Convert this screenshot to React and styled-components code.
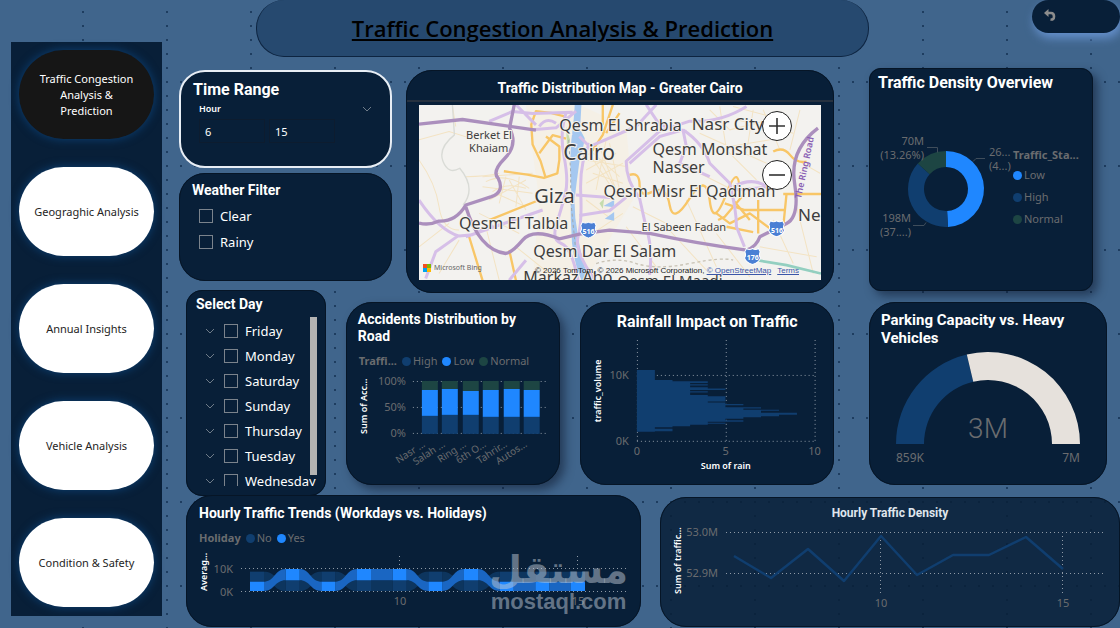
import React from "react";
import styled, { createGlobalStyle, css } from "styled-components";

const HIGH = "#103e6f";
const LOW = "#1f87ff";
const NORMAL = "#1d4543";
const MUTED = "#6a6c6f";

const PAGES = [
  "Traffic Congestion\nAnalysis &\nPrediction",
  "Geograghic Analysis",
  "Annual Insights",
  "Vehicle Analysis",
  "Condition & Safety",
];

const DAYS = ["Friday", "Monday", "Saturday", "Sunday", "Thursday", "Tuesday", "Wednesday"];

// each road: label, top of the "low" part, top of the "high" part
const ROADS = [
  ["Nasr ...", 20, 46],
  ["Salah ...", 19, 45],
  ["Ring ...", 21, 45],
  ["6th O...", 20, 47],
  ["Tahrir...", 19, 47],
  ["Autos...", 20, 47],
];

// rain histogram: y start, x end
const RAIN = [
  [225, 255], [255, 308], [259, 414], [264, 361], [268, 414], [272, 361], [277, 414],
  [281, 467], [285, 361], [289, 414], [293, 361], [300, 414], [304, 467], [320, 414],
  [323, 467], [327, 521], [331, 467], [337, 574], [341, 521], [345, 628], [348, 574],
  [354, 682], [360, 628], [364, 574], [367, 521], [372, 467], [376, 521], [381, 414],
  [384, 467], [387, 414], [390, 361], [394, 308], [397, 255], [402, 308], [409, 255],
];

const rainPath = `M201 225${RAIN.map(([y, x]) => `V${y}H${x}`).join("")}V411H201Z`;

// true when the holiday series is on top of the ribbon
const RIBBON = [false, true, false, true, true, false, true, false, false, false];

function ribbonBand(isYes, yesOnTop) {
  if (yesOnTop) return isYes ? [240, 274] : [274, 306];
  return isYes ? [278, 306] : [248, 278];
}

function ribbonPath(i, isYes) {
  const a = ribbonBand(isYes, RIBBON[i]);
  const b = ribbonBand(isYes, RIBBON[i + 1]);
  const x1 = 252 + i * 107;
  const x2 = x1 + 65;
  const m = x1 + 32;
  return `M${x1} ${a[0]}C${m} ${a[0]} ${m} ${b[0]} ${x2} ${b[0]}V${b[1]}C${m} ${b[1]} ${m} ${a[1]} ${x1} ${a[1]}Z`;
}

function arc(cx, cy, r1, r2, from, to) {
  const p = (r, t) => {
    const a = (t - 0.25) * Math.PI * 2;
    return `${cx + r * Math.cos(a)} ${cy + r * Math.sin(a)}`;
  };
  const big = to - from > 0.5 ? 1 : 0;
  return `M${p(r1, from)}A${r1} ${r1} 0 ${big} 1 ${p(r1, to)}L${p(r2, to)}A${r2} ${r2} 0 ${big} 0 ${p(r2, from)}Z`;
}

const Chevron = () => (
  <svg width="10" height="6" viewBox="0 0 10 6" aria-hidden="true">
    <path d="M1 1l4 4 4-4" fill="none" stroke="#6f7c89" />
  </svg>
);

function TrafficMap() {
  return (
    <MapFrame>
      <MapArt viewBox="60 135 1203 525" preserveAspectRatio="xMidYMid slice">
        <rect x="60" y="135" width="1203" height="525" fill="#f3f2ef" />
        <path d="M380 135L540 135 680 200 700 420 640 520 560 660 400 660 420 420z" fill="#f5f0e6" />
        <g fill="none" stroke="#f3e3c3" strokeWidth="3">
          <path d="M60 240L150 215 230 240M160 140l10 60M250 350l150-10M250 380l150 20M270 420l110-60M290 400l90 40M330 360l50 90M260 365q60-30 130 20M280 395q40-30 100-10M300 430l20-80M350 440l10-90" />
          <path d="M560 300l120 20M580 340l90 30M560 370l110-60M600 260l50 130M630 250l30 140M560 420l80 60M580 520l90-60M600 300l60 110M570 270l90 80M560 330l90-50M575 290l80 120M620 240l-30 150" />
          <path d="M960 140l20 130 90 90M1000 140l150 40M1010 180l170 40M1060 150l-20 130M900 220l200 90M880 330l120 60M1200 150l-30 120M1190 300l70 40M930 150l60 60 120-30M1090 150l50 120M990 260l120-20" />
          <path d="M680 500l90 120M700 440l120 60M800 500l120 130M860 420l90 200M950 520l100 130M1080 560l170 30M1190 440l50 200M1120 480l60 130" />
          <path d="M60 560l90-70M120 640l60-100M240 460l120 60M260 500l40 160M350 560l100 80M60 300q50 70 60 140t60 70M200 350q60 0 100-10" />
        </g>
        <path d="M160 135l6 90q-50 40-34 80t50 20q50 60 10 110" fill="none" stroke="#d9dbd6" strokeWidth="4" />
        <g fill="#a5c8f0">
          <path d="M526 135h20q-2 40-4 74l14 26q-4 30-16 70-8 60-14 110-2 50 8 100 10 80 36 145h-24q-30-70-30-150-4-60 0-110-6-90 0-160 8-60 10-105z" />
          <path d="M612 438l32-18v22zM616 476l28-20v26z" />
        </g>
        <path d="M500 200l12 40-8 40zM600 430l14-14-4 30z" fill="#c5dcae" />
        <g fill="none" strokeLinejoin="round">
          <g stroke="#f8c667" strokeWidth="7">
            <path d="M460 160l-50-6-14 40 4 60 24 50 14 46M496 170l-40-10M420 280l40-54 40 10M440 230l40 30 0 40-6 40-40 14-50-10-70-10M640 135l-30 90-40 60M610 135v60M660 160l-40 60M270 480l150-60M210 530l40 130M330 570l20 90M690 345q30-10 30 30t40 20 50 40 60-20 60 6 50-20 40 14M1120 275q30-16 50 10t50 20M975 430l60 20 120 0M1035 400l-60 70-20 10M950 460l40 30 60-30 80 60M1075 420v100M1000 420l50 60M1160 400l-10 100M1150 402h113M980 500l80 16" />
          </g>
        </g>
        <g fill="none" stroke="#d6bfe8" strokeWidth="9" strokeLinejoin="round">
          <path d="M270 185l70-30 60 6 120-4M400 210l70-6 60-50M350 135l60 60M470 190q-30-20-50 10M500 160q-20 60-6 130t4 110-26 90 14 60 50 110" />
          <path d="M570 250q-30 60-26 150t-8 130 50 130M540 230l30 30 140-60 60-65M740 135l40 60 80 20M850 210q60 40 80 100l60 60q20 80 20 130l24 60M1040 140q-80 50-170 44l-90 30-100 90q0 60 40 110l20 90q20 60 10 140M690 310l90-80 70-20" />
          <path d="M530 405l110 8M540 466l90-14 50-40M850 210l10 50-20 50 90 40M1000 380q60-30 100 0M60 420q60 90 120 108l40-4 60-30M180 525l-70 50-30 80M1000 390l120-10M200 530l230-80M380 600l-50 60" />
        </g>
        <g fill="none" stroke="#ab8fbd" strokeWidth="10" strokeLinejoin="round">
          <path d="M60 193l130-14 220 32" />
          <path d="M345 135l-14 70q26 50-14 90t-20 60q20 40-20 55L200 435q-30 50-80 48-30 14-60 6" />
          <path d="M200 440q40 130 120 140 20-4 50-40t110-4l60-14 90-12 120 10q140 30 290 50 30-10 40-40l80-40q40-20 24-120t70-165" />
        </g>
        <path d="M1070 600l90 15 103 25" fill="none" stroke="#93cfc0" strokeWidth="8" />
        <path d="M508 240l6 100v80l14 140" fill="none" stroke="#a4a9ab" strokeWidth="3" strokeDasharray="9 8" />
        <path d="M590 610q60-20 120 0t160 0 130-10" fill="none" stroke="#c8c2b4" strokeWidth="4" strokeDasharray="9 8" />
        {[[567, 508], [1130, 504], [1058, 587]].map(([x, y]) => (
          <path key={x} transform={`translate(${x} ${y})`} d="M-18-22q9 6 18 0 9 6 18 0l5 10q-5 12 1 18-4 14-24 20-20-6-24-20 6-6 1-18z" fill="#4a7fd4" stroke="#fff" strokeWidth="3" />
        ))}
      </MapArt>
      <MapArt viewBox="0 0 401 175" preserveAspectRatio="xMidYMid slice">
        <MapLabels>
          <text x="47" y="34" fontSize="11">Berket El</text>
          <text x="50" y="47" fontSize="11">Khaiam</text>
          <text x="140" y="26" fontSize="16">Qesm El Shrabia</text>
          <text x="272" y="25" fontSize="17">Nasr City</text>
          <text x="144" y="55" fontSize="21">Cairo</text>
          <text x="233" y="50" fontSize="16">Qesm Monshat</text>
          <text x="233" y="68" fontSize="16">Nasser</text>
          <text x="115" y="98" fontSize="20">Giza</text>
          <text x="184" y="92" fontSize="16">Qesm Misr El Qadimah</text>
          <text x="40" y="124" fontSize="16">Qesm El Talbia</text>
          <text x="222" y="126" fontSize="11">El Sabeen Fadan</text>
          <text x="378" y="116" fontSize="17">Ne</text>
          <text x="114" y="152" fontSize="16">Qesm Dar El Salam</text>
          <text x="104" y="178" fontSize="16">Markaz Abo</text>
          <text x="198" y="181" fontSize="15">Qesm El Maadi</text>
        </MapLabels>
        <RoadName transform="translate(381 94) rotate(-78)">The Ring Road</RoadName>
        <Shield x="169" y="129">516</Shield>
        <Shield x="357" y="128">516</Shield>
        <Shield x="333" y="155">176</Shield>
      </MapArt>
      <Bing>
        <svg width="8" height="8" viewBox="0 0 8 8" aria-hidden="true">
          <path d="M0 0h4v4H0z" fill="#f25022" />
          <path d="M4 0h4v4H4z" fill="#7fba00" />
          <path d="M0 4h4v4H0z" fill="#00a4ef" />
          <path d="M4 4h4v4H4z" fill="#ffb900" />
        </svg>
        Microsoft Bing
      </Bing>
      <Credits>
        <span>© 2026 TomTom, © 2026 Microsoft Corporation, <a href="#osm">© OpenStreetMap</a></span>
        <a href="#terms">Terms</a>
      </Credits>
      <ZoomControls>
        <ZoomButton type="button" aria-label="Zoom in">
          <svg width="16" height="16" viewBox="0 0 16 16"><path d="M0 8h16M8 0v16" stroke="#333" strokeWidth="1.6" /></svg>
        </ZoomButton>
        <ZoomButton type="button" aria-label="Zoom out">
          <svg width="16" height="16" viewBox="0 0 16 16"><path d="M0 8h16" stroke="#333" strokeWidth="1.6" /></svg>
        </ZoomButton>
      </ZoomControls>
    </MapFrame>
  );
}

function AccidentsChart() {
  return (
    <Chart viewBox="0 0 215 110">
      <AxisTitle transform="translate(21 64) rotate(-90)">Sum of Acc...</AxisTitle>
      <Tick x="60" y="15" textAnchor="end">100%</Tick>
      <Tick x="60" y="41" textAnchor="end">50%</Tick>
      <Tick x="60" y="67" textAnchor="end">0%</Tick>
      <GridLine d="M67 11.5H202M67 37.5H202M67 63.5H202" />
      {ROADS.map(([name, low, high], i) => {
        const x = 76 + Math.round(i * 20.4);
        return (
          <g key={name}>
            <rect x={x} y="11" width="16" height={low - 11} fill={NORMAL} />
            <rect x={x} y={low} width="16" height={high - low} fill={LOW} />
            <rect x={x} y={high} width="16" height={64 - high} fill={HIGH} />
            <RoadTick transform={`translate(${x + 4} 76) rotate(-33)`} textAnchor="end">{name}</RoadTick>
          </g>
        );
      })}
    </Chart>
  );
}

function RainChart() {
  return (
    <Chart viewBox="0 0 254 150">
      <AxisTitle transform="translate(21 59) rotate(-90)" textAnchor="middle">traffic_volume</AxisTitle>
      <Tick x="49" y="47" textAnchor="end">10K</Tick>
      <Tick x="49" y="113" textAnchor="end">0K</Tick>
      <GridLine d="M57 43.5H236M57 109.5H236M57.5 8V110M146.5 8V110M235.5 8V110" />
      <path d={rainPath} transform="translate(-10 -37) scale(0.33333)" fill={HIGH} />
      <Tick x="57" y="123" textAnchor="middle">0</Tick>
      <Tick x="146" y="123" textAnchor="middle">5</Tick>
      <Tick x="235" y="123" textAnchor="middle">10</Tick>
      <AxisTitle x="146" y="137" textAnchor="middle">Sum of rain</AxisTitle>
    </Chart>
  );
}

function TrendsChart() {
  return (
    <Chart viewBox="0 0 455 76">
      <AxisTitle transform="translate(21 44) rotate(-90)">Averag...</AxisTitle>
      <Tick x="47" y="26" textAnchor="end">10K</Tick>
      <Tick x="47" y="49" textAnchor="end">0K</Tick>
      <g transform="translate(-6 -58) scale(0.33333)">
        {RIBBON.slice(1).map((_, i) => (
          <g key={i}>
            <path d={ribbonPath(i, false)} fill={HIGH} opacity="0.7" />
            <path d={ribbonPath(i, true)} fill="#1a66c2" />
          </g>
        ))}
        {RIBBON.map((onTop, i) => {
          const no = ribbonBand(false, onTop);
          const yes = ribbonBand(true, onTop);
          return (
            <g key={i}>
              <rect x={210 + i * 107} y={no[0]} width="42" height={no[1] - no[0]} fill={HIGH} />
              <rect x={210 + i * 107} y={yes[0]} width="42" height={yes[1] - yes[0]} fill={LOW} />
            </g>
          );
        })}
      </g>
      <GridLine d="M55 21.5H442M55 44.5H442M213.5 9V22M391.5 9V22" />
      <Tick x="214" y="58" textAnchor="middle">10</Tick>
      <Tick x="392" y="58" textAnchor="middle">15</Tick>
    </Chart>
  );
}

function HourlyChart() {
  return (
    <Chart viewBox="0 0 460 100">
      <AxisTitle transform="translate(21 72) rotate(-90)">Sum of traffic...</AxisTitle>
      <Tick x="58" y="14" textAnchor="end">53.0M</Tick>
      <Tick x="58" y="55" textAnchor="end">52.9M</Tick>
      <GridLine d="M66 10.5H444M66 51.5H444M220.5 10V74M402.5 10V74" />
      <polyline
        points="74,34 111,56 148,27 184,59 221,14 257,53 293,33 329,33 366,15 403,47"
        fill="none"
        stroke={HIGH}
        strokeWidth="2.5"
        strokeLinejoin="round"
      />
      <Tick x="221" y="85" textAnchor="middle">10</Tick>
      <Tick x="403" y="85" textAnchor="middle">15</Tick>
    </Chart>
  );
}

export default function App() {
  return (
    <>
      <GlobalStyle />
      <Page>
        <Sidebar>
          {PAGES.map((name, i) => (
            <PageButton key={name} type="button" $active={i === 0}>{name}</PageButton>
          ))}
        </Sidebar>

        <Main>
          <TopBar>
            <Heading>Traffic Congestion Analysis &amp; Prediction</Heading>
            <BackButton type="button" aria-label="Back">
              <svg width="12" height="12" viewBox="0 0 12 12">
                <path d="M2 4h5q3 0 3 3.500t-3.500 3" fill="none" stroke="#8d8d8d" strokeWidth="2.600" />
                <path d="M0 4l4.500-4v8z" fill="#8d8d8d" />
              </svg>
            </BackButton>
          </TopBar>

          <Upper>
            <div>
              <FilterRow>
                <Filters>
                  <TimeCard>
                    <CardTitle>Time Range</CardTitle>
                    <HourHead>
                      <span id="hour">Hour</span>
                      <Chevron />
                    </HourHead>
                    <HourInputs>
                      <HourInput aria-labelledby="hour" defaultValue="6" />
                      <HourInput aria-labelledby="hour" defaultValue="15" />
                    </HourInputs>
                  </TimeCard>
                  <WeatherCard>
                    <CardTitle $size={14}>Weather Filter</CardTitle>
                    <Options>
                      {["Clear", "Rainy"].map((name) => (
                        <Option key={name}><Check type="checkbox" />{name}</Option>
                      ))}
                    </Options>
                  </WeatherCard>
                </Filters>
                <MapCard>
                  <MapTitle>Traffic Distribution Map - Greater Cairo</MapTitle>
                  <TrafficMap />
                </MapCard>
              </FilterRow>

              <ChartRow>
                <DayCard>
                  <CardTitle $size={14}>Select Day</CardTitle>
                  <DayList>
                    {DAYS.map((day) => (
                      <DayRow key={day}>
                        <Chevron />
                        <Option><Check type="checkbox" />{day}</Option>
                      </DayRow>
                    ))}
                    <ScrollThumb />
                  </DayList>
                </DayCard>
                <AccidentsCard>
                  <CardTitle $size={14}>Accidents Distribution by Road</CardTitle>
                  <Legend>
                    <b>Traffi...</b>
                    <Key $color={HIGH}>High</Key>
                    <Key $color={LOW}>Low</Key>
                    <Key $color={NORMAL}>Normal</Key>
                  </Legend>
                  <AccidentsChart />
                </AccidentsCard>
                <RainCard>
                  <CardTitle $center>Rainfall Impact on Traffic</CardTitle>
                  <RainChart />
                </RainCard>
              </ChartRow>
            </div>

            <RightColumn>
              <DensityCard>
                <CardTitle>Traffic Density Overview</CardTitle>
                <DonutRow>
                  <Chart viewBox="0 0 144 150">
                    <path d={arc(77, 92, 38, 22, 0, 0.492)} fill={LOW} />
                    <path d={arc(77, 92, 38, 22, 0.492, 0.867)} fill={HIGH} />
                    <path d={arc(77, 92, 38, 22, 0.867, 1)} fill={NORMAL} />
                    <path d="M58 50.500h10.500v5M116 61.500h-9l-3 3M44 128.500h11l2-3" fill="none" stroke="#3f4d5b" />
                    <Tick x="55" y="48" textAnchor="end">70M</Tick>
                    <Tick x="55" y="62" textAnchor="end">(13.26%)</Tick>
                    <Tick x="120" y="59">26...</Tick>
                    <Tick x="120" y="73">(4...)</Tick>
                    <Tick x="42" y="125" textAnchor="end">198M</Tick>
                    <Tick x="42" y="139" textAnchor="end">(37....)</Tick>
                  </Chart>
                  <DonutLegend>
                    <b>Traffic_Sta...</b>
                    <Key $color={LOW}>Low</Key>
                    <Key $color={HIGH}>High</Key>
                    <Key $color={NORMAL}>Normal</Key>
                  </DonutLegend>
                </DonutRow>
              </DensityCard>
              <ParkingCard>
                <CardTitle $size={15}>Parking Capacity vs. Heavy Vehicles</CardTitle>
                <Chart viewBox="0 0 238 130">
                  <path d={arc(119, 97, 92, 64, 0.75, 0.963)} fill={HIGH} />
                  <path d={arc(119, 97, 92, 64, 0.963, 1.25)} fill="#e6e1dc" />
                  <GaugeValue x="119" y="91" textAnchor="middle">3M</GaugeValue>
                  <GaugeEnd x="27" y="115">859K</GaugeEnd>
                  <GaugeEnd x="211" y="115" textAnchor="end">7M</GaugeEnd>
                </Chart>
              </ParkingCard>
            </RightColumn>
          </Upper>

          <BottomRow>
            <TrendsCard>
              <CardTitle $size={14}>Hourly Traffic Trends (Workdays vs. Holidays)</CardTitle>
              <Legend>
                <b>Holiday</b>
                <Key $color={HIGH}>No</Key>
                <Key $color={LOW}>Yes</Key>
              </Legend>
              <TrendsChart />
              <Watermark>
                <strong lang="ar">مستقل</strong>
                <span>mostaql.com</span>
              </Watermark>
            </TrendsCard>
            <HourlyCard>
              <CardTitle $size={12} $center>Hourly Traffic Density</CardTitle>
              <HourlyChart />
            </HourlyCard>
          </BottomRow>
        </Main>
      </Page>
    </>
  );
}

const GlobalStyle = createGlobalStyle`
  * { box-sizing: border-box; }
  body {
    margin: 0;
    background-color: #40658c;
    background-image:
      radial-gradient(circle, #1e3d60 0 1px, transparent 1px),
      radial-gradient(circle, #1e3d60 0 1px, transparent 1px);
    background-size: 84px 14px, 14px 84px;
    background-position: 41px 5px, 6px 40px;
    font-family: "Noto Sans", "Open Sans", sans-serif;
    color: #fff;
  }
  button, input { font-family: inherit; }
`;

const Page = styled.div`
  display: flex;
  gap: 17px;
  min-height: 100vh;
  padding-left: 11px;
  overflow: hidden;
`;

const Sidebar = styled.nav`
  display: flex;
  flex-direction: column;
  gap: 28px;
  flex: 0 0 151px;
  align-self: flex-start;
  margin-top: 42px;
  padding: 8px 8px 9px;
  background: #081f38;
`;

const PageButton = styled.button`
  height: 89px;
  padding: 0 8px;
  border: 0;
  border-radius: 45px;
  font-size: 11px;
  line-height: 16px;
  white-space: pre-line;
  color: ${(p) => (p.$active ? "#fff" : "#252423")};
  background: ${(p) => (p.$active ? "#161616" : "#fff")};
  box-shadow: 0 0 8px 1px #0b3b6b;
  cursor: pointer;
`;

const Main = styled.main`
  flex: 1;
  min-width: 0;
`;

const TopBar = styled.header`
  display: flex;
  align-items: flex-start;
  justify-content: space-between;
  gap: 163px;
  padding-left: 77px;
`;

const Heading = styled.h1`
  flex: 1;
  margin: 0;
  height: 57px;
  border: 1px solid #0d2440;
  border-top: 0;
  border-radius: 28px;
  background: #26496f;
  color: #000;
  font-family: "Open Sans", "Noto Sans", sans-serif;
  font-size: 22px;
  font-weight: 600;
  line-height: 57px;
  text-align: center;
  text-decoration: underline;
  white-space: nowrap;
`;

const BackButton = styled.button`
  flex: 0 0 88px;
  height: 33px;
  padding: 0 12px;
  border: 0;
  border-radius: 17px;
  background: #081f38;
  box-shadow: 2px 5px 10px #6590cc;
  text-align: left;
  line-height: 1;
  cursor: pointer;
`;

const Upper = styled.div`
  display: grid;
  grid-template-columns: 655fr 251fr;
  gap: 35px;
  padding-top: 11px;
`;

const FilterRow = styled.div`
  display: grid;
  grid-template-columns: 213fr 428fr;
  gap: 14px;
  padding-top: 2px;
`;

const Filters = styled.div`
  display: flex;
  flex-direction: column;
  gap: 5px;
`;

const shadow = css`
  box-shadow: 5px 5px 10px rgba(10, 20, 40, 0.5);
`;

const Card = styled.section`
  min-width: 0;
  background: #081f38;
  outline: 1px solid #061526;
  outline-offset: -1px;
  border-radius: 26px;
`;

const CardTitle = styled.h2`
  margin: 0;
  font-family: Roboto, "Noto Sans", sans-serif;
  font-size: ${(p) => p.$size || 16}px;
  font-weight: 700;
  line-height: 18px;
  text-align: ${(p) => (p.$center ? "center" : "left")};
`;

const TimeCard = styled(Card)`
  height: 98px;
  padding: 9px 18px 0 12px;
  border: 2px solid #e8eef5;
  outline: 0;
`;

const HourHead = styled.div`
  display: flex;
  align-items: center;
  justify-content: space-between;
  padding-left: 6px;
  font-size: 9px;
  font-weight: 600;
  line-height: 20px;
`;

const HourInputs = styled.div`
  display: flex;
  gap: 4px;
  padding-left: 6px;
`;

const HourInput = styled.input`
  width: 66px;
  height: 24px;
  padding: 0 5px;
  border: 1px solid #0d1c2f;
  background: transparent;
  color: #fff;
  font-size: 11px;
`;

const WeatherCard = styled(Card)`
  height: 108px;
  padding: 8px 13px;
`;

const Options = styled.div`
  display: grid;
  gap: 6px;
  padding: 7px;
`;

const Option = styled.label`
  display: flex;
  align-items: center;
  gap: 7px;
  font-size: 13px;
  line-height: 20px;
`;

const Check = styled.input`
  appearance: none;
  flex: 0 0 14px;
  height: 14px;
  margin: 0;
  border: 1px solid #7b838c;
`;

const MapCard = styled(Card)`
  display: flex;
  flex-direction: column;
  height: 223px;
  padding-bottom: 13px;
`;

const MapTitle = styled.h2`
  margin: 0 0 3px;
  border-bottom: 2px solid #26313f;
  font-family: Roboto, "Noto Sans", sans-serif;
  font-size: 14px;
  font-weight: 700;
  line-height: 28px;
  padding-top: 4px;
  height: 32px;
  text-align: center;
`;

const MapFrame = styled.div`
  position: relative;
  flex: 1;
  margin: 0 13px;
  overflow: hidden;
`;

const MapArt = styled.svg`
  position: absolute;
  inset: 0;
  width: 100%;
  height: 100%;
`;

const MapLabels = styled.g`
  fill: #3d3d3d;
  stroke: #f5f3ee;
  stroke-width: 2px;
  paint-order: stroke;
`;

const RoadName = styled.text`
  fill: #8a5fb4;
  font-size: 9px;
  font-weight: 600;
`;

const Shield = styled.text`
  fill: #fff;
  font-size: 7px;
  font-weight: 700;
  text-anchor: middle;
`;

const Bing = styled.div`
  position: absolute;
  left: 4px;
  bottom: 7px;
  display: flex;
  align-items: center;
  gap: 3px;
  color: #666;
  font-size: 7px;
  line-height: 10px;
`;

const Credits = styled.div`
  position: absolute;
  right: 22px;
  bottom: 4px;
  display: flex;
  gap: 6px;
  color: #222;
  font-family: "Liberation Sans", sans-serif;
  font-size: 8px;
  line-height: 10px;
  white-space: nowrap;

  a {
    color: #3a56a8;
  }
`;

const ZoomControls = styled.div`
  position: absolute;
  top: 6px;
  right: 29px;
  display: grid;
  gap: 19px;
`;

const ZoomButton = styled.button`
  display: grid;
  place-items: center;
  width: 30px;
  height: 30px;
  padding: 0;
  border: 1px solid #222;
  border-radius: 50%;
  background: #fff;
`;

const ChartRow = styled.div`
  display: grid;
  grid-template-columns: 140fr 215fr 254fr;
  column-gap: 20px;
  align-items: start;
  margin-top: -3px;
  padding-left: 7px;
`;

const DayCard = styled(Card)`
  height: 206px;
  padding: 5px 9px 10px 10px;
  border-radius: 16px;
`;

const DayList = styled.div`
  position: relative;
  height: 169px;
  margin-top: 4px;
  padding-top: 1px;
  overflow: hidden;
`;

const DayRow = styled.div`
  display: flex;
  align-items: center;
  gap: 9px;
  height: 25px;
  padding-left: 9px;
`;

const ScrollThumb = styled.div`
  position: absolute;
  top: 0;
  right: 0;
  width: 7px;
  height: 158px;
  background: #b3b3b3;
`;

const AccidentsCard = styled(Card)`
  ${shadow}
  height: 183px;
  margin-top: 12px;

  ${CardTitle} {
    padding: 9px 12px 0;
    line-height: 17px;
  }
`;

const Legend = styled.div`
  display: flex;
  align-items: center;
  gap: 5px;
  padding: 8px 13px 1px;
  color: ${MUTED};
  font-size: 11px;
  line-height: 16px;
`;

const Key = styled.span`
  display: flex;
  align-items: center;
  gap: 2px;

  &::before {
    content: "";
    width: 9px;
    height: 9px;
    border-radius: 50%;
    background: ${(p) => p.$color};
  }
`;

const RainCard = styled(Card)`
  height: 183px;
  margin-top: 12px;

  ${CardTitle} {
    padding-top: 10px;
    line-height: 20px;
  }
`;

const Chart = styled.svg`
  display: block;
  width: 100%;
  overflow: visible;
`;

const Tick = styled.text`
  fill: ${MUTED};
  font-size: 11px;
`;

const RoadTick = styled(Tick)`
  font-size: 10px;
`;

const AxisTitle = styled.text`
  fill: #fff;
  font-size: 9px;
  font-weight: 600;
`;

const GridLine = styled.path`
  fill: none;
  stroke: #8f9aa6;
  stroke-dasharray: 1 3;
`;

const RightColumn = styled.div`
  display: flex;
  flex-direction: column;
  gap: 11px;
`;

const DensityCard = styled(Card)`
  ${shadow}
  height: 223px;
  margin-right: 27px;
  border-radius: 12px;

  ${CardTitle} {
    padding: 6px 9px 5px;
  }
`;

const DonutRow = styled.div`
  display: grid;
  grid-template-columns: 144fr 80fr;
`;

const DonutLegend = styled.div`
  display: flex;
  flex-direction: column;
  gap: 6px;
  padding-top: 52px;
  color: ${MUTED};
  font-size: 11px;
  line-height: 16px;

  b {
    line-height: 12px;
  }
`;

const ParkingCard = styled(Card)`
  height: 183px;
  margin-right: 13px;

  ${CardTitle} {
    padding: 9px 12px 0;
  }
`;

const GaugeValue = styled.text`
  fill: ${MUTED};
  font-family: Roboto, sans-serif;
  font-size: 28px;
  font-weight: 300;
`;

const GaugeEnd = styled.text`
  fill: ${MUTED};
  font-size: 12px;
`;

const BottomRow = styled.div`
  display: grid;
  grid-template-columns: 455fr 460fr;
  gap: 19px;
  margin-top: -1px;
  padding-left: 7px;
`;

const TrendsCard = styled(Card)`
  position: relative;
  height: 132px;

  ${CardTitle} {
    padding: 9px 13px 0;
  }
`;

const Watermark = styled.div`
  position: absolute;
  right: 13px;
  bottom: 14px;
  display: flex;
  flex-direction: column;
  align-items: center;
  color: rgba(190, 200, 212, 0.5);

  strong {
    font-family: "DejaVu Sans", sans-serif;
    font-size: 38px;
    line-height: 42px;
  }

  span {
    font-family: "Liberation Sans", sans-serif;
    font-size: 22px;
    font-weight: 700;
    line-height: 22px;
  }
`;

const HourlyCard = styled(Card)`
  height: 130px;
  margin-top: 2px;
  background: rgba(8, 31, 56, 0.86);

  ${CardTitle} {
    padding-top: 7px;
    color: #dfe5ec;
  }
`;
